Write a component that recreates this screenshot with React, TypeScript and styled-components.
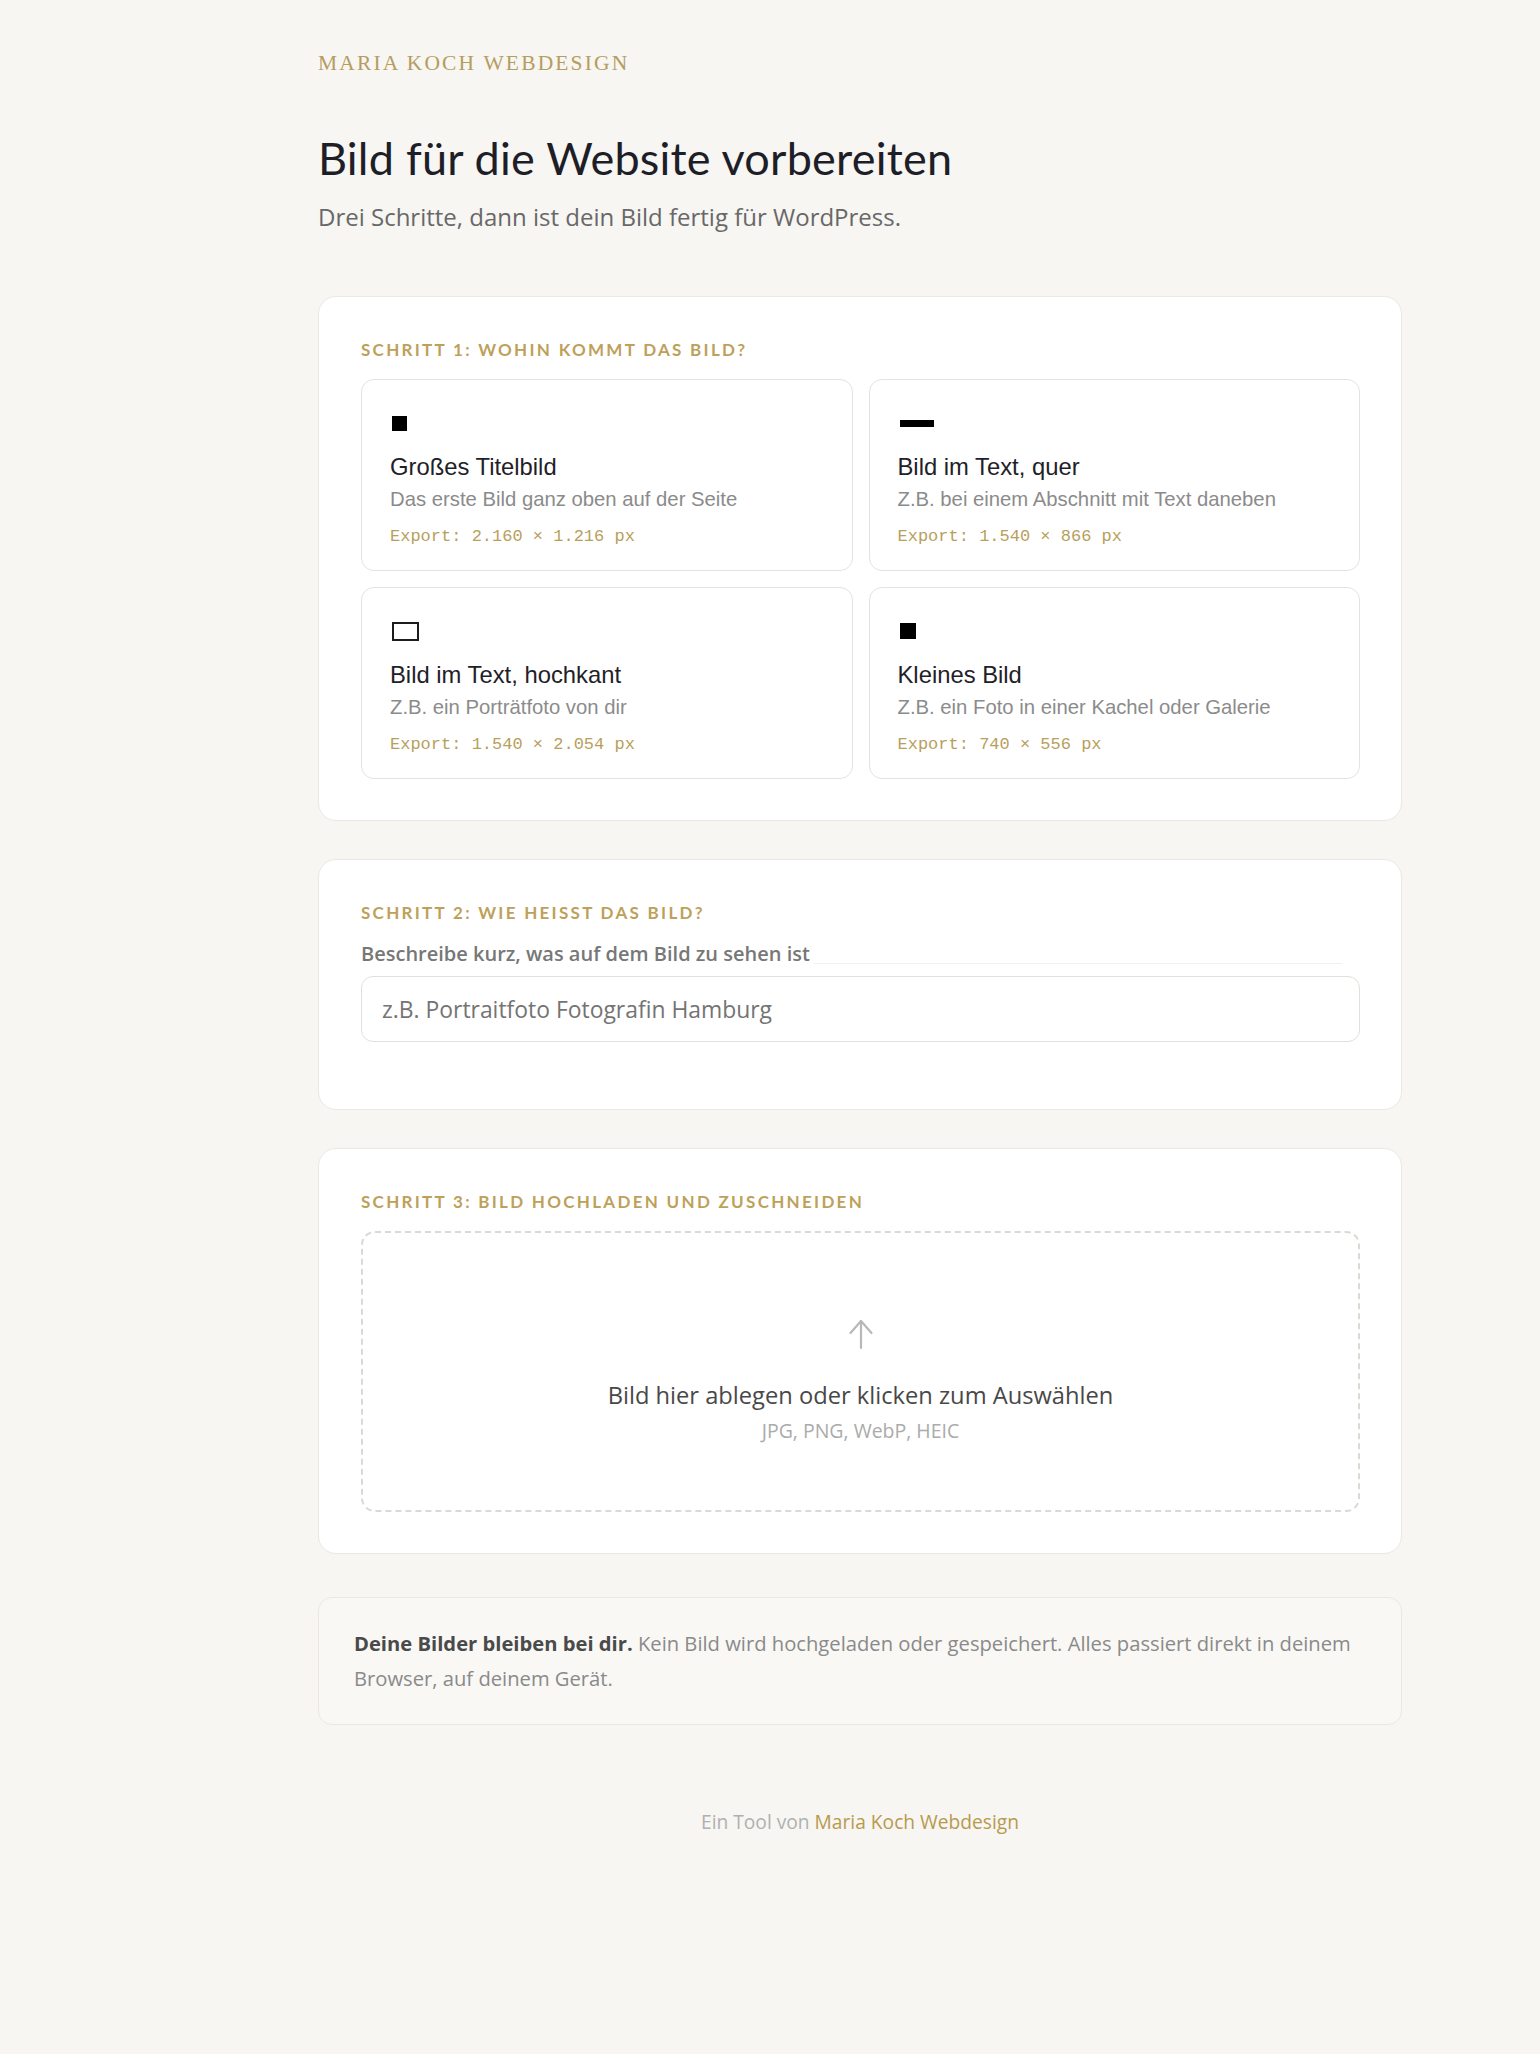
import React from "react";
import styled, { createGlobalStyle } from "styled-components";

const GlobalStyle = createGlobalStyle`
  html, body {
    margin: 0;
    padding: 0;
    background: #f7f6f2;
  }
  body {
    font-family: "Open Sans", "Lato", sans-serif;
    color: #2a2a2a;
  }
`;

const Page = styled.div`
  min-height: 2054px;
  box-sizing: border-box;
  padding: 50px 0 120px 318px;
`;

const Wrap = styled.div`
  width: 1084px;
  display: flex;
  flex-direction: column;
`;

const Brand = styled.div`
  font-family: "Liberation Serif", serif;
  font-size: 21.5px;
  line-height: 26px;
  letter-spacing: 0.1em;
  text-transform: uppercase;
  color: #b59d5f;
`;

const Title = styled.h1`
  margin: 55px 0 0;
  font-family: "Lato", sans-serif;
  font-weight: 400;
  font-size: 45px;
  line-height: 54px;
  color: #1e1e28;
  letter-spacing: 0.005em;
`;

const Subtitle = styled.p`
  margin: 16px 0 0;
  font-size: 24px;
  line-height: 32px;
  color: #686868;
`;

const Card = styled.section<{ $extraBottom?: number }>`
  margin-top: 38px;
  background: #ffffff;
  border: 1px solid #ebe8e1;
  border-radius: 18px;
  padding: 42px 41px ${(p) => 41 + (p.$extraBottom || 0)}px 42px;
`;

const FirstCard = styled(Card)`
  margin-top: 63px;
`;

const StepLabel = styled.h2`
  margin: 0 0 18px;
  font-family: "Lato", sans-serif;
  font-weight: 700;
  font-size: 17px;
  line-height: 22px;
  letter-spacing: 0.135em;
  text-transform: uppercase;
  color: #bda15a;
`;

const OptionGrid = styled.div`
  display: grid;
  grid-template-columns: 1fr 1fr;
  gap: 16px;
`;

const Option = styled.div`
  border: 1px solid #e6e3dc;
  border-radius: 13px;
  background: #fff;
  padding: 23px 28px 21px;
  font-family: "Liberation Sans", Arial, sans-serif;
`;

const IconRow = styled.div`
  height: 40px;
  display: flex;
  align-items: center;
`;

const Shape = styled.span<{ $w: number; $h: number; $outline?: boolean }>`
  display: block;
  width: ${(p) => p.$w}px;
  height: ${(p) => p.$h}px;
  box-sizing: border-box;
  background: ${(p) => (p.$outline ? "transparent" : "#000")};
  border: ${(p) => (p.$outline ? "2px solid #1c1c1c" : "none")};
  margin-left: 2px;
`;

const OptionTitle = styled.div`
  margin-top: 10px;
  font-size: 23.8px;
  line-height: 28px;
  color: #1f2128;
`;

const OptionDesc = styled.div`
  margin-top: 5px;
  font-size: 20.3px;
  line-height: 26px;
  color: #8b8b8b;
`;

const ExportLine = styled.div`
  margin-top: 13px;
  font-family: "Liberation Mono", "DejaVu Sans Mono", monospace;
  font-size: 17px;
  line-height: 24px;
  color: #b89f5c;
`;

const FieldLabel = styled.label`
  display: flex;
  align-items: flex-end;
  font-weight: 600;
  font-size: 20px;
  line-height: 24px;
  color: #777;

  &::after {
    content: "";
    flex: 1;
    height: 1px;
    margin: 0 18px 2px 4px;
    background: #f1f0ec;
  }
`;

const Input = styled.input`
  display: block;
  box-sizing: border-box;
  width: 100%;
  height: 66px;
  margin-top: 10px;
  padding: 0 20px;
  border: 1px solid #e3e0d9;
  border-radius: 12px;
  font-family: "Open Sans", sans-serif;
  font-size: 22.9px;
  color: #333;
  background: #fff;
  outline: none;

  &::placeholder {
    color: #747474;
  }
`;

const DropZone = styled.div`
  height: 281px;
  box-sizing: border-box;
  border: 2px dashed #dcd9d3;
  border-radius: 14px;
  padding-top: 85px;
  display: flex;
  flex-direction: column;
  align-items: center;
`;

const DropText = styled.div`
  margin-top: 30px;
  font-size: 23.7px;
  line-height: 30px;
  color: #484848;
`;

const DropHint = styled.div`
  margin-top: 10px;
  font-size: 19.5px;
  line-height: 22px;
  color: #ababab;
`;

const Notice = styled.div`
  margin-top: 43px;
  background: #f9f8f5;
  border: 1px solid #ebe8e1;
  border-radius: 14px;
  padding: 28px 36px 28px 35px;
  font-size: 20.2px;
  line-height: 35px;
  color: #8a8a8a;

  strong {
    font-weight: 700;
    color: #4a4a4a;
  }
`;

const Footer = styled.footer`
  margin-top: 85px;
  text-align: center;
  font-size: 19.2px;
  line-height: 24px;
  color: #b0b0b0;

  a {
    color: #b89a4e;
    text-decoration: none;
  }
`;

function UploadArrow() {
  return (
    <svg width="26" height="32" viewBox="0 0 26 32" fill="none" stroke="#b8b8b8" strokeWidth="2.2" strokeLinecap="round" strokeLinejoin="round">
      <path d="M13 30V3" />
      <path d="M2.5 15L13 3l10.5 12" />
    </svg>
  );
}

type OptionData = {
  title: string;
  desc: string;
  size: string;
  shape: { w: number; h: number; outline?: boolean };
};

const options: OptionData[] = [
  { title: "Großes Titelbild", desc: "Das erste Bild ganz oben auf der Seite", size: "2.160 × 1.216 px", shape: { w: 15, h: 15 } },
  { title: "Bild im Text, quer", desc: "Z.B. bei einem Abschnitt mit Text daneben", size: "1.540 × 866 px", shape: { w: 34, h: 7 } },
  { title: "Bild im Text, hochkant", desc: "Z.B. ein Porträtfoto von dir", size: "1.540 × 2.054 px", shape: { w: 27, h: 19, outline: true } },
  { title: "Kleines Bild", desc: "Z.B. ein Foto in einer Kachel oder Galerie", size: "740 × 556 px", shape: { w: 16, h: 16 } },
];

export default function App() {
  return (
    <>
      <GlobalStyle />
      <Page>
        <Wrap>
          <Brand>Maria Koch Webdesign</Brand>
          <Title>Bild für die Website vorbereiten</Title>
          <Subtitle>Drei Schritte, dann ist dein Bild fertig für WordPress.</Subtitle>

          <FirstCard>
            <StepLabel>Schritt 1: Wohin kommt das Bild?</StepLabel>
            <OptionGrid>
              {options.map((o) => (
                <Option key={o.title}>
                  <IconRow>
                    <Shape $w={o.shape.w} $h={o.shape.h} $outline={o.shape.outline} />
                  </IconRow>
                  <OptionTitle>{o.title}</OptionTitle>
                  <OptionDesc>{o.desc}</OptionDesc>
                  <ExportLine>Export: {o.size}</ExportLine>
                </Option>
              ))}
            </OptionGrid>
          </FirstCard>

          <Card $extraBottom={26}>
            <StepLabel>Schritt 2: Wie heißt das Bild?</StepLabel>
            <FieldLabel htmlFor="alt">Beschreibe kurz, was auf dem Bild zu sehen ist</FieldLabel>
            <Input id="alt" placeholder="z.B. Portraitfoto Fotografin Hamburg" />
          </Card>

          <Card>
            <StepLabel>Schritt 3: Bild hochladen und zuschneiden</StepLabel>
            <DropZone>
              <UploadArrow />
              <DropText>Bild hier ablegen oder klicken zum Auswählen</DropText>
              <DropHint>JPG, PNG, WebP, HEIC</DropHint>
            </DropZone>
          </Card>

          <Notice>
            <strong>Deine Bilder bleiben bei dir.</strong> Kein Bild wird hochgeladen oder gespeichert. Alles passiert direkt in deinem Browser, auf deinem Gerät.
          </Notice>

          <Footer>
            Ein Tool von <a href="#">Maria Koch Webdesign</a>
          </Footer>
        </Wrap>
      </Page>
    </>
  );
}
